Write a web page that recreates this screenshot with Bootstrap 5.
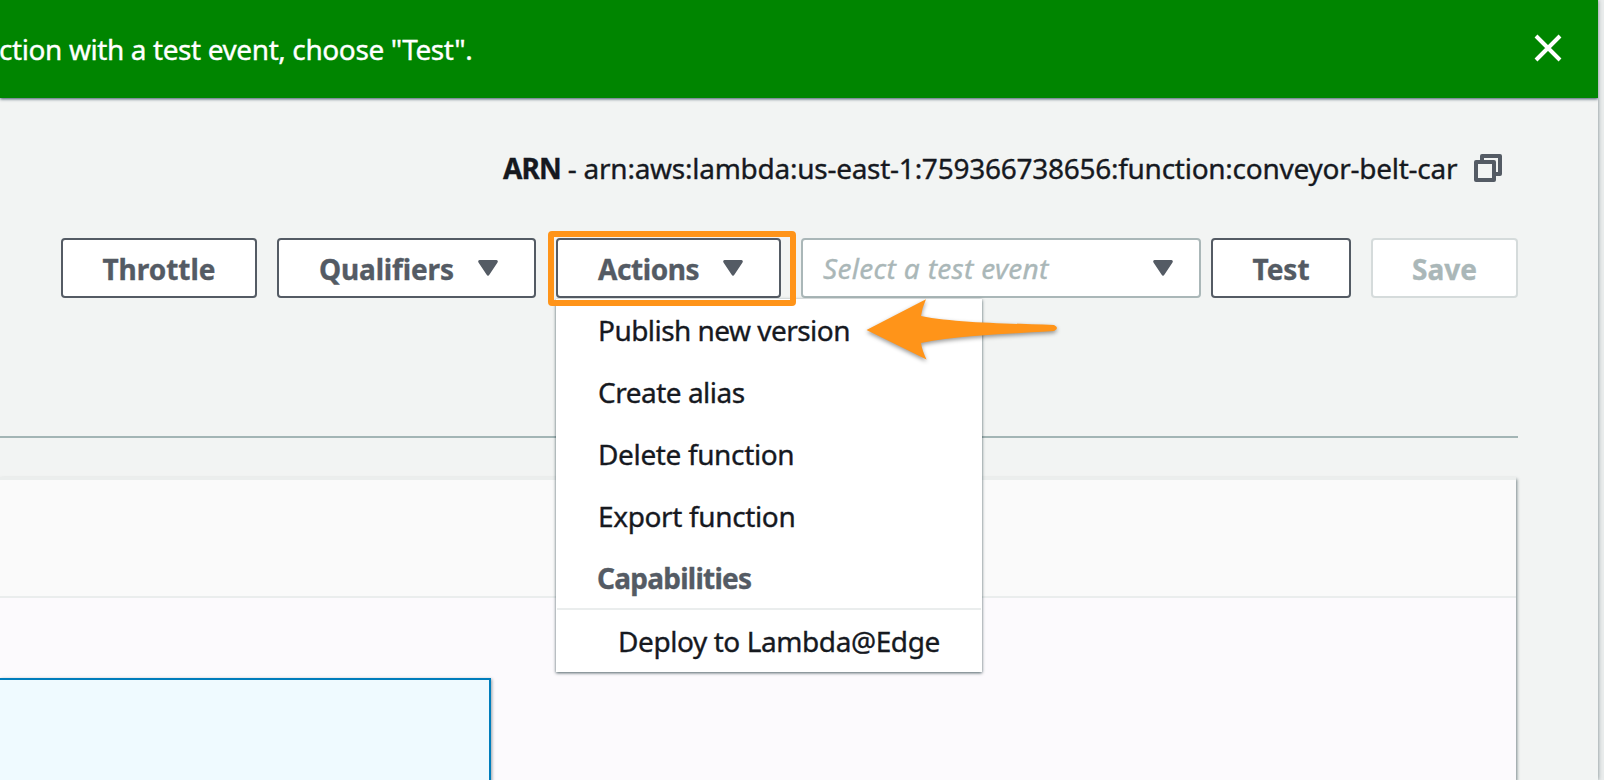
<!DOCTYPE html>
<html lang="en">
<head>
<meta charset="utf-8">
<title>Lambda function</title>
<link rel="stylesheet" href="https://cdn.jsdelivr.net/npm/bootstrap@5.3.0/dist/css/bootstrap.min.css">
<style>
html,body{height:780px;overflow:hidden}
body{background:#eaeded;font-family:"Noto Sans","Open Sans",sans-serif;font-size:28px;line-height:42px;color:#16191f;-webkit-text-stroke:.35px}
.page-shell{width:1598px;height:780px;background:#f2f4f3;box-shadow:0 0 4px rgba(0,28,36,.5)}
.flash{height:98px;background:#008500;color:#fff;box-shadow:0 1px 3px 0 rgba(0,28,50,.75);padding-right:36px}
.flash span{margin-left:-1px}
.flash svg{margin-bottom:2px}
.arn{height:60px;margin-top:40px;padding:0 96px 0 503px}
.tools{height:60px;margin-top:40px;padding-left:61px}
.aws-btn{height:60px;border:2px solid #545b64;border-radius:4px;background:#fff;color:#545b64;font-size:28px;line-height:42px;font-weight:700;padding:0}
.aws-btn.off{border-color:#d5dbdb;color:#aab7b8}
.aws-btn:hover,.aws-btn:focus{background:#fff;color:#545b64;border-color:#545b64}
.aws-btn{padding-top:1px}
.aws-btn svg{margin-right:36px;margin-bottom:1px}
.w-thr{width:196px}.w-qua{width:259px;margin-left:20px;padding-left:40px}.w-act{width:225px;padding-left:40px}
.w-tst{width:140px;margin-left:10px}.w-sav{width:147px;margin-left:20px}
.acts{margin-left:20px}
.event-select{width:400px;height:60px;margin-left:20px;border:2px solid #aab7b8;border-radius:4px;background:#fff;color:#aab7b8;padding:0 26px 0 20px}
.hilite{position:absolute;left:-8px;top:-7px;width:248px;height:75px;border:6px solid #ff9419;border-radius:4px;z-index:5}
.acts-menu{position:absolute;left:0;top:61px;width:426px;height:373px;background:#fff;box-shadow:0 1px 3px 0 rgba(0,28,36,.7);z-index:3;margin:0}
.acts-menu li{height:62px;padding-left:42px;line-height:62px;white-space:nowrap}
.acts-menu li.cap{color:#545b64;font-weight:700;padding-left:41px;line-height:63px}
.acts-menu li.sub{border-top:2px solid #eaeded;margin:-1px 1px 0;padding-left:61px;height:64px}
.pointer{position:absolute;left:306px;top:56px;z-index:6;filter:drop-shadow(0 2px 2px rgba(0,0,0,.4))}
.rule{margin-top:138px;width:1518px;height:2px;background:#a3b5b5}
.panel{margin-top:39px;width:1516px;height:303px;background:#fcfafd;border-top:3px solid #ebeeed;box-shadow:1px 2px 3px rgba(0,28,36,.5)}
.panel-top{height:118px;background:#fafafa;border-bottom:2px solid #eaeded}
.node-box{width:491px;height:110px;margin-top:80px;background:#effaff;border:solid #007dbc;border-width:2px 2px 0 0;box-shadow:1px 1px 3px rgba(0,28,36,.4)}
svg{display:block;flex:none}
/* tracking */
.t-flash{letter-spacing:-.4px}
.t-arn{letter-spacing:-.26px}
.t-arn b{letter-spacing:-.9px}
.t-qua{letter-spacing:-.15px}
.t-act{letter-spacing:-.42px}
.t-sel{letter-spacing:.32px}
.t-pub{letter-spacing:-.54px}
.t-cre{letter-spacing:-.5px}
.t-del,.t-exp{letter-spacing:-.36px}
.t-cap{letter-spacing:-.75px}
.t-dep{letter-spacing:-.42px}
</style>
</head>
<body>
<main class="page-shell overflow-hidden">
  <div class="flash d-flex align-items-center justify-content-between position-relative">
    <span class="text-nowrap t-flash">ction with a test event, choose "Test".</span>
    <svg width="28" height="28" viewBox="0 0 28 28" stroke="#fff" stroke-width="4"><path d="M2 2 26 26M26 2 2 26"/></svg>
  </div>
  <div class="arn d-flex align-items-center">
    <span class="text-nowrap t-arn"><b>ARN</b> - arn:aws:lambda:us-east-1:759366738656:function:conveyor-belt-car</span>
    <svg class="ms-auto" width="28" height="28" viewBox="0 0 28 28" fill="none" stroke="#545b64" stroke-width="4" stroke-linejoin="round"><path d="M2 8H20V26H2ZM8 6V2H26V20H22"/></svg>
  </div>
  <div class="tools d-flex">
    <button class="btn aws-btn w-thr"><span class="t-thr">Throttle</span></button>
    <button class="btn aws-btn w-qua d-flex align-items-center"><span class="t-qua">Qualifiers</span><svg class="ms-auto" width="20" height="16" viewBox="0 0 20 16" fill="#545b64"><path d="M1.5 0H18.500Q20.500 .5 19.500 2.500L11.500 14.500Q10 17 8.500 14.500L.5 2.500Q-.5 .5 1.500 0Z"/></svg></button>
    <div class="acts position-relative">
      <button class="btn aws-btn w-act d-flex align-items-center"><span class="t-act">Actions</span><svg class="ms-auto" width="20" height="16" viewBox="0 0 20 16" fill="#545b64"><path d="M1.5 0H18.500Q20.500 .5 19.500 2.500L11.500 14.500Q10 17 8.500 14.500L.5 2.500Q-.5 .5 1.500 0Z"/></svg></button>
      <div class="hilite"></div>
      <ul class="acts-menu list-unstyled">
        <li><span class="t-pub">Publish new version</span></li>
        <li><span class="t-cre">Create alias</span></li>
        <li><span class="t-del">Delete function</span></li>
        <li><span class="t-exp">Export function</span></li>
        <li class="cap"><span class="t-cap">Capabilities</span></li>
        <li class="sub"><span class="t-dep">Deploy to Lambda@Edge</span></li>
      </ul>
      <svg class="pointer" width="200" height="70" viewBox="862 294 200 70" fill="#ff9419"><path d="M866.500 330 926 299.300Q922 308 921 316C955 323 1010 323.500 1054 325Q1060 328 1054 331C1010 334 960 335 921 343Q922 350 926.500 359.500Z"/></svg>
    </div>
    <div class="event-select d-flex align-items-center justify-content-between"><em class="t-sel text-nowrap">Select a test event</em><svg width="20" height="16" viewBox="0 0 20 16" fill="#545b64"><path d="M1.500 0H18.500Q20.500 .5 19.500 2.500L11.500 14.500Q10 17 8.500 14.500L.5 2.500Q-.5 .5 1.500 0Z"/></svg></div>
    <button class="btn aws-btn w-tst"><span class="t-tst">Test</span></button>
    <button class="btn aws-btn off w-sav"><span class="t-sav">Save</span></button>
  </div>
  <div class="rule"></div>
  <section class="panel">
    <div class="panel-top"></div>
    <div class="node-box"></div>
  </section>
</main>
<script src="https://cdn.jsdelivr.net/npm/bootstrap@5.3.0/dist/js/bootstrap.bundle.min.js"></script>
</body>
</html>
